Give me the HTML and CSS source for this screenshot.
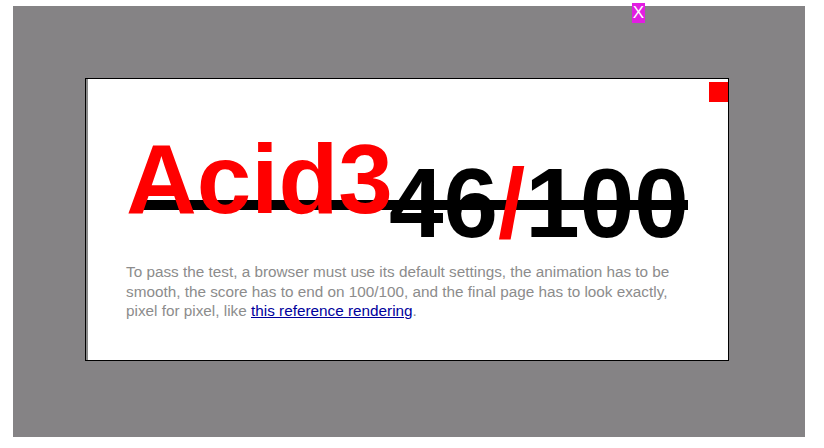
FILE: index.html
```html
<!DOCTYPE html>
<html lang="en">
<head>
<meta charset="UTF-8">
<title>The Acid3 Test</title>
<link rel="stylesheet" href="styles.css">
</head>
<body>
<div class="marker">X</div>

<div class="frame">
    <div class="page">
        <div class="strike"></div>
        <div class="corner"></div>

        <h1 class="title">Acid3<span class="score">46<span class="slash">/</span>100</span></h1>

        <p class="instructions">To pass the test, a browser must use its default settings, the animation has to be
        smooth, the score has to end on 100/100, and the final page has to look exactly,
        pixel for pixel, like <a href="#reference">this reference rendering</a>.</p>
    </div>
</div>
</body>
</html>
```

FILE: styles.css
```css
html, body {
  margin: 0;
  padding: 0;
  background: #fff;
}
body {
  font-family: 'Liberation Sans', Arial, sans-serif;
  position: relative;
  width: 824px;
  height: 448px;
}
.frame {
  margin: 6px 0 0 13px;
  width: 792px;
  height: 431px;
  box-sizing: border-box;
  padding: 72px 76px 76px 72px;
  background-color: #858385;
}
.page {
  position: relative;
  height: 283px;
  box-sizing: border-box;
  background: #fff;
  border: 1px solid #000;
  box-shadow: inset 2px 0 0 #8a8a8a;
  padding: 51px 41px 0 40px;
}
.strike {
  position: absolute;
  left: 55px;
  top: 121px;
  width: 547px;
  height: 10px;
  background: #000;
}
.corner {
  position: absolute;
  right: 0;
  top: 3px;
  width: 19px;
  height: 20px;
  background: #f00;
}
.title {
  position: relative;
  margin: 0;
  font-size: 98px;
  line-height: 98px;
  font-weight: bold;
  color: #f00;
  white-space: nowrap;
}
.score {
  color: #000;
  vertical-align: -24px;
  margin-left: -4px;
}
.slash {
  color: #f00;
}
.instructions {
  position: relative;
  margin: 10px 0 0;
  font-size: 15.3px;
  line-height: 19.5px;
  color: #8c8c8c;
}
.instructions a {
  color: #00009c;
}
.marker {
  position: absolute;
  left: 632px;
  top: 3px;
  width: 13px;
  height: 20px;
  background: #e21de2;
  color: #fff;
  font-size: 17px;
  line-height: 20px;
  text-align: center;
}
```
